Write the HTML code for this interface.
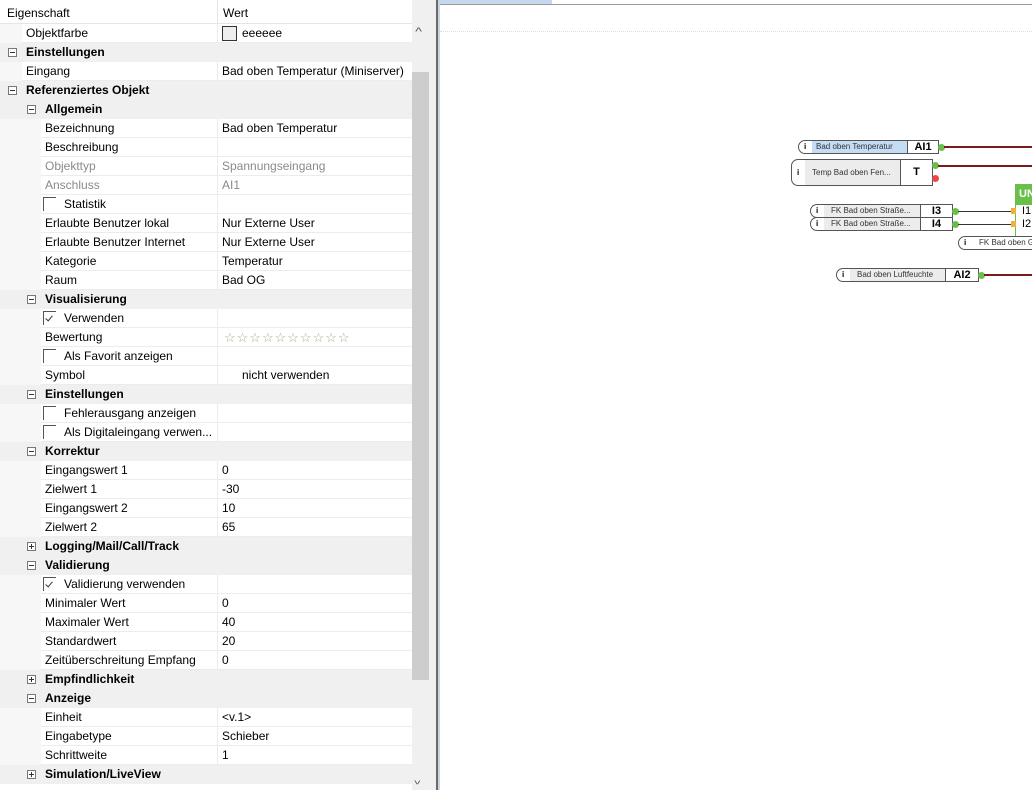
<!DOCTYPE html>
<html><head><meta charset="utf-8"><style>
*{margin:0;padding:0;box-sizing:border-box}
body{width:1032px;height:790px;overflow:hidden;background:#f0f0f0;font-family:"Liberation Sans",sans-serif;font-size:12px;color:#000;position:relative}
.abs{position:absolute}
#grid{position:absolute;left:0;top:0;width:412px;height:790px;background:#fff}
.r{position:absolute;left:0;width:412px;height:19px;line-height:19px;white-space:nowrap}
.r .gut{position:absolute;left:0;top:0;bottom:0;background:#f7f7f7}
.r .k{position:absolute;top:0;height:19px;border-bottom:1px solid #ececec}
.r .v{position:absolute;left:217px;top:0;right:0;height:19px;padding-left:4px;border-left:1px solid #ececec;border-bottom:1px solid #ececec}
.g{background:#f0f0f0;font-weight:bold}
.tg{position:absolute;top:5px;width:9px;height:9px;border:1px solid #777;background:#fff}
.tg:before{content:"";position:absolute;left:1px;top:3px;width:5px;height:1px;background:#333}
.tg.p:after{content:"";position:absolute;left:3px;top:1px;width:1px;height:5px;background:#333}
.cb{position:absolute;top:2px;width:13px;height:14px;border-left:1px solid #555;border-top:1px solid #555}
.cb.c:after{content:"";position:absolute;left:3px;top:2px;width:3px;height:6px;border-right:1px solid #333;border-bottom:1px solid #333;transform:rotate(40deg)}
.gr{color:#8a8a8a}
.blk{position:absolute;height:14px;border:1px solid #555;border-radius:7px 0 0 7px;background:#fff;font-size:8px;line-height:12px}
.blk .i{position:absolute;left:5px;top:0;font-weight:bold;font-size:8px}
.blk .lb{position:absolute;top:0;bottom:0;background:#ececec;padding-left:4px;overflow:hidden;white-space:nowrap;color:#333}
.blk .nm{position:absolute;top:0;bottom:0;right:0;border-left:1px solid #555;text-align:center;font-size:11px;font-weight:bold;line-height:12px}
.dot{position:absolute;width:7px;height:7px;border-radius:50%;background:#6abf4b}
.ln{position:absolute;height:2px;background:#7a1a1a}
</style></head><body>
<div id="grid">
<div class="r" style="top:0;height:24px;line-height:26px;background:#fff;border-bottom:1px solid #e5e5e5"><span class="abs" style="left:7px">Eigenschaft</span><span class="abs" style="left:217px;top:0;bottom:0;border-left:1px solid #e5e5e5;padding-left:5px">Wert</span></div>

<div class="r" style="top:24px"><div class="gut" style="width:22px"></div><div class="k" style="left:22px;width:195px;padding-left:4px">Objektfarbe</div><div class="v"><span class="abs" style="left:4px;top:2px;width:15px;height:15px;border:1px solid #333;background:#eee"></span><span style="margin-left:20px">eeeeee</span></div></div>
<div class="r g" style="top:43px"><div class="tg" style="left:8px"></div><span class="abs" style="left:26px">Einstellungen</span></div>
<div class="r" style="top:62px"><div class="gut" style="width:22px"></div><div class="k" style="left:22px;width:195px;padding-left:4px">Eingang</div><div class="v">Bad oben Temperatur (Miniserver)</div></div>
<div class="r g" style="top:81px"><div class="tg" style="left:8px"></div><span class="abs" style="left:26px">Referenziertes Objekt</span></div>
<div class="r g" style="top:100px"><div class="tg" style="left:27px"></div><span class="abs" style="left:45px">Allgemein</span></div>
<div class="r" style="top:119px"><div class="gut" style="width:41px"></div><div class="k" style="left:41px;width:176px;padding-left:4px">Bezeichnung</div><div class="v">Bad oben Temperatur</div></div>
<div class="r" style="top:138px"><div class="gut" style="width:41px"></div><div class="k" style="left:41px;width:176px;padding-left:4px">Beschreibung</div><div class="v"></div></div>
<div class="r gr" style="top:157px"><div class="gut" style="width:41px"></div><div class="k" style="left:41px;width:176px;padding-left:4px">Objekttyp</div><div class="v">Spannungseingang</div></div>
<div class="r gr" style="top:176px"><div class="gut" style="width:41px"></div><div class="k" style="left:41px;width:176px;padding-left:4px">Anschluss</div><div class="v">AI1</div></div>
<div class="r" style="top:195px"><div class="gut" style="width:41px"></div><div class="k" style="left:41px;width:176px;padding-left:23px"><div class="cb" style="left:2px"></div>Statistik</div><div class="v"></div></div>
<div class="r" style="top:214px"><div class="gut" style="width:41px"></div><div class="k" style="left:41px;width:176px;padding-left:4px">Erlaubte Benutzer lokal</div><div class="v">Nur Externe User</div></div>
<div class="r" style="top:233px"><div class="gut" style="width:41px"></div><div class="k" style="left:41px;width:176px;padding-left:4px">Erlaubte Benutzer Internet</div><div class="v">Nur Externe User</div></div>
<div class="r" style="top:252px"><div class="gut" style="width:41px"></div><div class="k" style="left:41px;width:176px;padding-left:4px">Kategorie</div><div class="v">Temperatur</div></div>
<div class="r" style="top:271px"><div class="gut" style="width:41px"></div><div class="k" style="left:41px;width:176px;padding-left:4px">Raum</div><div class="v">Bad OG</div></div>
<div class="r g" style="top:290px"><div class="tg" style="left:27px"></div><span class="abs" style="left:45px">Visualisierung</span></div>
<div class="r" style="top:309px"><div class="gut" style="width:41px"></div><div class="k" style="left:41px;width:176px;padding-left:23px"><div class="cb c" style="left:2px"></div>Verwenden</div><div class="v"></div></div>
<div class="r" style="top:328px"><div class="gut" style="width:41px"></div><div class="k" style="left:41px;width:176px;padding-left:4px">Bewertung</div><div class="v" style="color:#b0a890;font-size:13px;letter-spacing:1px;padding-left:6px">☆☆☆☆☆☆☆☆☆☆</div></div>
<div class="r" style="top:347px"><div class="gut" style="width:41px"></div><div class="k" style="left:41px;width:176px;padding-left:23px"><div class="cb" style="left:2px"></div>Als Favorit anzeigen</div><div class="v"></div></div>
<div class="r" style="top:366px"><div class="gut" style="width:41px"></div><div class="k" style="left:41px;width:176px;padding-left:4px">Symbol</div><div class="v" style="padding-left:24px">nicht verwenden</div></div>
<div class="r g" style="top:385px"><div class="tg" style="left:27px"></div><span class="abs" style="left:45px">Einstellungen</span></div>
<div class="r" style="top:404px"><div class="gut" style="width:41px"></div><div class="k" style="left:41px;width:176px;padding-left:23px"><div class="cb" style="left:2px"></div>Fehlerausgang anzeigen</div><div class="v"></div></div>
<div class="r" style="top:423px"><div class="gut" style="width:41px"></div><div class="k" style="left:41px;width:176px;padding-left:23px"><div class="cb" style="left:2px"></div>Als Digitaleingang verwen...</div><div class="v"></div></div>
<div class="r g" style="top:442px"><div class="tg" style="left:27px"></div><span class="abs" style="left:45px">Korrektur</span></div>
<div class="r" style="top:461px"><div class="gut" style="width:41px"></div><div class="k" style="left:41px;width:176px;padding-left:4px">Eingangswert 1</div><div class="v">0</div></div>
<div class="r" style="top:480px"><div class="gut" style="width:41px"></div><div class="k" style="left:41px;width:176px;padding-left:4px">Zielwert 1</div><div class="v">-30</div></div>
<div class="r" style="top:499px"><div class="gut" style="width:41px"></div><div class="k" style="left:41px;width:176px;padding-left:4px">Eingangswert 2</div><div class="v">10</div></div>
<div class="r" style="top:518px"><div class="gut" style="width:41px"></div><div class="k" style="left:41px;width:176px;padding-left:4px">Zielwert 2</div><div class="v">65</div></div>
<div class="r g" style="top:537px"><div class="tg p" style="left:27px"></div><span class="abs" style="left:45px">Logging/Mail/Call/Track</span></div>
<div class="r g" style="top:556px"><div class="tg" style="left:27px"></div><span class="abs" style="left:45px">Validierung</span></div>
<div class="r" style="top:575px"><div class="gut" style="width:41px"></div><div class="k" style="left:41px;width:176px;padding-left:23px"><div class="cb c" style="left:2px"></div>Validierung verwenden</div><div class="v"></div></div>
<div class="r" style="top:594px"><div class="gut" style="width:41px"></div><div class="k" style="left:41px;width:176px;padding-left:4px">Minimaler Wert</div><div class="v">0</div></div>
<div class="r" style="top:613px"><div class="gut" style="width:41px"></div><div class="k" style="left:41px;width:176px;padding-left:4px">Maximaler Wert</div><div class="v">40</div></div>
<div class="r" style="top:632px"><div class="gut" style="width:41px"></div><div class="k" style="left:41px;width:176px;padding-left:4px">Standardwert</div><div class="v">20</div></div>
<div class="r" style="top:651px"><div class="gut" style="width:41px"></div><div class="k" style="left:41px;width:176px;padding-left:4px">Zeitüberschreitung Empfang</div><div class="v">0</div></div>
<div class="r g" style="top:670px"><div class="tg p" style="left:27px"></div><span class="abs" style="left:45px">Empfindlichkeit</span></div>
<div class="r g" style="top:689px"><div class="tg" style="left:27px"></div><span class="abs" style="left:45px">Anzeige</span></div>
<div class="r" style="top:708px"><div class="gut" style="width:41px"></div><div class="k" style="left:41px;width:176px;padding-left:4px">Einheit</div><div class="v">&lt;v.1&gt;</div></div>
<div class="r" style="top:727px"><div class="gut" style="width:41px"></div><div class="k" style="left:41px;width:176px;padding-left:4px">Eingabetype</div><div class="v">Schieber</div></div>
<div class="r" style="top:746px"><div class="gut" style="width:41px"></div><div class="k" style="left:41px;width:176px;padding-left:4px">Schrittweite</div><div class="v">1</div></div>
<div class="r g" style="top:765px"><div class="tg p" style="left:27px"></div><span class="abs" style="left:45px">Simulation/LiveView</span></div>
</div>

<!-- scrollbar -->
<div class="abs" style="left:412px;top:24px;width:18px;height:766px;background:#f0f0f0"></div>
<div class="abs" style="left:412px;top:72px;width:17px;height:608px;background:#cdcdcd"></div>
<div class="abs" style="left:416px;top:26px;font-size:11px;color:#555;transform:scaleX(1.3)">^</div>
<div class="abs" style="left:415px;top:774px;font-size:10px;color:#555;transform:scaleX(1.3) rotate(180deg)">^</div>

<!-- splitter / canvas -->
<div class="abs" style="left:436px;top:0;width:2px;height:790px;background:#6a6a6a"></div>
<div class="abs" style="left:438px;top:0;width:2px;height:790px;background:#ccd3e6"></div>
<div class="abs" style="left:440px;top:0;width:592px;height:790px;background:#fff"></div>
<div class="abs" style="left:438px;top:0;width:114px;height:4px;background:#c6d6ee"></div>
<div class="abs" style="left:440px;top:4px;width:592px;height:1px;background:#999"></div>
<div class="abs" style="left:440px;top:31px;width:592px;height:1px;border-top:1px dotted #ddd"></div>

<div class="blk" style="left:798px;top:140px;width:141px"><span class="i">i</span><div class="lb" style="left:13px;width:95px;background:#c5dcf5">Bad oben Temperatur</div><div class="nm" style="width:31px">AI1</div></div>
<div class="dot" style="left:938px;top:144px"></div><div class="ln" style="left:944px;top:146px;width:88px"></div>

<div class="blk" style="left:791px;top:159px;width:142px;height:27px;line-height:25px"><span class="i" style="line-height:25px">i</span><div class="lb" style="left:13px;width:95px;padding-left:7px;line-height:25px">Temp Bad oben Fen...</div><div class="nm" style="width:32px;line-height:25px">T</div></div>
<div class="dot" style="left:932px;top:162px"></div><div class="ln" style="left:938px;top:165px;width:94px"></div>
<div class="dot" style="left:932px;top:175px;background:#e84848"></div>

<div class="blk" style="left:810px;top:204px;width:143px"><span class="i">i</span><div class="lb" style="left:13px;width:97px;padding-left:7px">FK Bad oben Straße...</div><div class="nm" style="width:32px">I3</div></div>
<div class="dot" style="left:952px;top:208px"></div><div class="abs" style="left:958px;top:211px;width:54px;height:1px;background:#333"></div>
<div class="blk" style="left:810px;top:217px;width:143px"><span class="i">i</span><div class="lb" style="left:13px;width:97px;padding-left:7px">FK Bad oben Straße...</div><div class="nm" style="width:32px">I4</div></div>
<div class="dot" style="left:952px;top:221px"></div><div class="abs" style="left:958px;top:224px;width:54px;height:1px;background:#333"></div>

<div class="abs" style="left:1015px;top:184px;width:17px;height:21px;background:#6abf4b;color:#fff;font-weight:bold;font-size:11px;line-height:21px;padding-left:4px">UN</div>
<div class="abs" style="left:1015px;top:205px;width:17px;height:40px;border-left:1px solid #6abf4b;border-bottom:1px solid #6abf4b;font-size:11px;line-height:13px;padding-left:6px;padding-top:0">I1<br>I2</div>
<div class="abs" style="left:1011px;top:208px;width:5px;height:6px;background:#f0b040"></div>
<div class="abs" style="left:1011px;top:221px;width:5px;height:6px;background:#f0b040"></div>

<div class="blk" style="left:958px;top:236px;width:80px"><span class="i">i</span><div class="lb" style="left:13px;width:70px;padding-left:7px;background:#fff">FK Bad oben Ga</div></div>

<div class="blk" style="left:836px;top:268px;width:143px"><span class="i">i</span><div class="lb" style="left:13px;width:96px;padding-left:7px">Bad oben Luftfeuchte</div><div class="nm" style="width:33px">AI2</div></div>
<div class="dot" style="left:978px;top:272px"></div><div class="ln" style="left:984px;top:274px;width:48px"></div>
</body></html>
